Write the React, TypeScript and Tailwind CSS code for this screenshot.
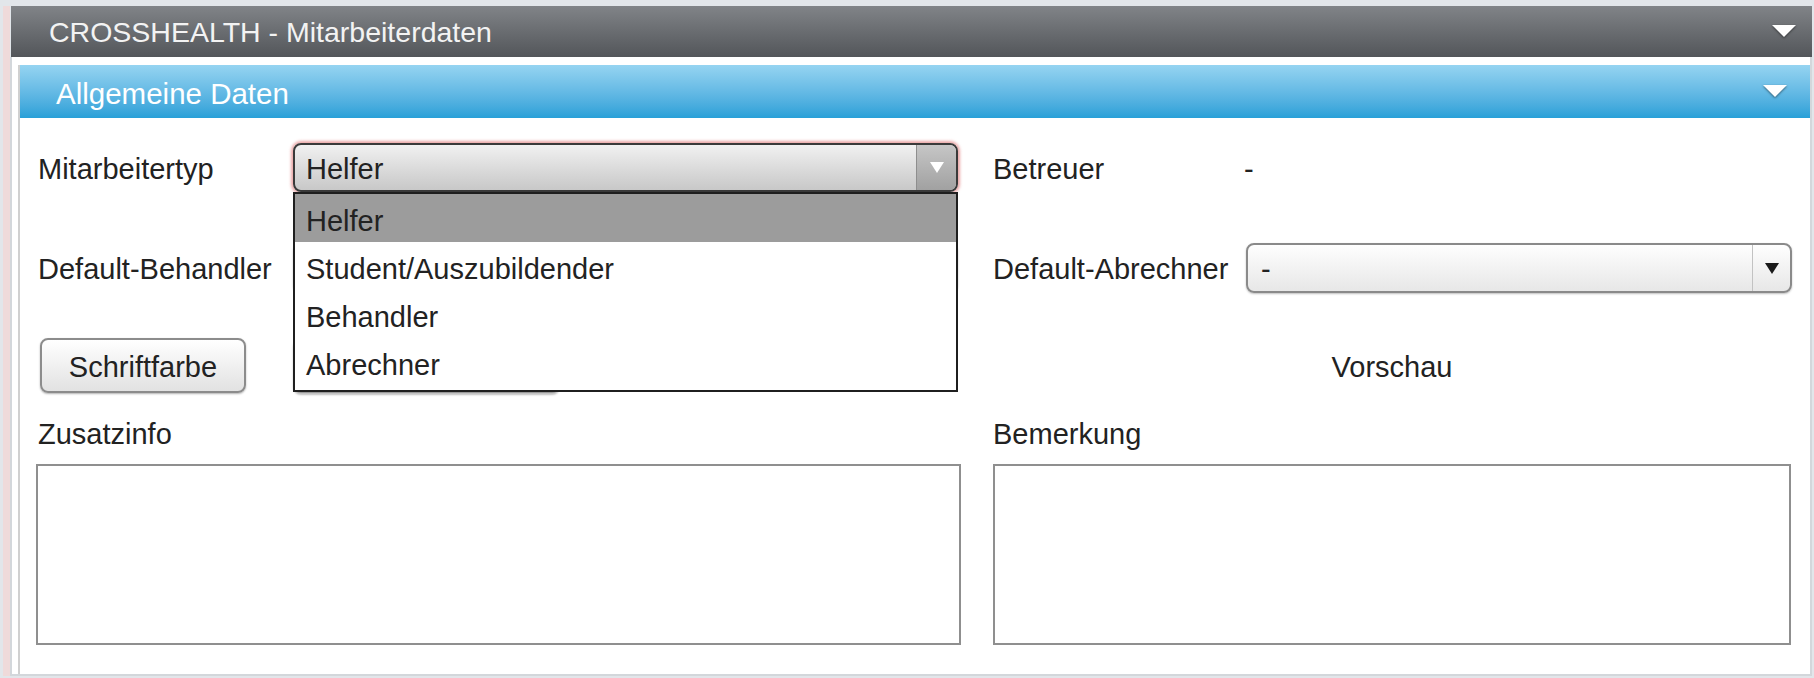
import React from 'react';

const typeOptions = ['Helfer', 'Student/Auszubildender', 'Behandler', 'Abrechner'];

// white caret on the accordion bars
const BarCaret = () => (
  <svg width="26" height="15" viewBox="0 0 26 15" className="drop-shadow-[0_1px_1px_rgba(0,0,0,0.5)]">
    <polygon points="1,1 25,1 13,13" fill="#ffffff" />
  </svg>
);

const SelectArrow = ({ light }: { light?: boolean }) => (
  <svg width="16" height="13" viewBox="0 0 16 13">
    <polygon points="1,1 15,1 8,12" fill={light ? '#ffffff' : '#1a1a1a'} />
  </svg>
);

const PlainSelect = ({ value, width }: { value: string; width: string }) => (
  <div
    className={`${width} h-full rounded-[8px] border-2 border-[#8a8a8a] bg-gradient-to-b from-[#fefefe] to-[#e7e7e7] shadow-[0_1px_2px_rgba(0,0,0,0.25)] flex items-center overflow-hidden`}
  >
    <span className="flex-1 pl-[13px] pt-[3px]">{value}</span>
    <span className="w-[38px] h-full border-l border-[#c2c2c2] flex items-center justify-center">
      <SelectArrow />
    </span>
  </div>
);

export default function App() {
  return (
    <div className="w-[1814px] h-[678px] bg-[#e2e6ea] pt-[6px] pl-[3px] overflow-hidden font-['Liberation_Sans',Arial,sans-serif] text-[29px] leading-none text-[#222]">
      <div className="w-[1809px] h-[670px] border-l-[7px] border-[#efdada] flex flex-col">
        {/* outer title bar */}
        <div className="h-[51px] ml-[1px] bg-gradient-to-b from-[#818488] to-[#53565a] flex items-center justify-between pl-[38px] pr-[15px]">
          <span className="text-[#f3f3f3] text-[28.5px] pt-[1px]">CROSSHEALTH - Mitarbeiterdaten</span>
          <BarCaret />
        </div>

        <div className="flex-1 bg-white border-l-2 border-r-2 border-b-2 border-[#d3d7db] pl-[6px] pt-[8px] flex">
          <div className="flex-1 border-l-2 border-[#d0d0d0] flex flex-col">
            {/* section bar */}
            <div className="h-[53px] bg-gradient-to-b from-[#95d4f1] to-[#27a0d8] flex items-center justify-between pl-[36px] pr-[22px]">
              <span className="text-white text-[29.5px] pt-[5px]">Allgemeine Daten</span>
              <BarCaret />
            </div>

            <div className="pl-[16px] pt-[25px]">
              {/* Mitarbeitertyp / Betreuer */}
              <div className="h-[49px] flex items-center">
                <div className="w-[925px] h-full flex items-center">
                  <span className="w-[257px] pl-[2px] pt-[3px]">Mitarbeitertyp</span>
                  <div className="relative w-[665px] h-full">
                    <div className="h-full rounded-[8px] border-2 border-[#3a3a3a] shadow-[0_0_3px_2px_rgba(222,110,110,0.6)] bg-gradient-to-b from-[#f1f1f1] via-[#dcdcdc] to-[#c8c8c8] flex items-center overflow-hidden">
                      <span className="flex-1 pl-[11px] pt-[3px]">Helfer</span>
                      <span className="w-[40px] h-full border-l border-[#8e8e8e] bg-gradient-to-b from-[#c6c6c6] to-[#a1a1a1] flex items-center justify-center">
                        <SelectArrow light />
                      </span>
                    </div>
                    <ul className="absolute top-full left-0 w-full z-20 bg-white border-2 border-[#1f1f1f] pb-[4px]">
                      {typeOptions.map((opt, i) => (
                        <li
                          key={opt}
                          className={`h-[48px] pl-[11px] pt-[6px] flex items-center ${i === 0 ? 'bg-[#9c9c9c]' : ''}`}
                        >
                          {opt}
                        </li>
                      ))}
                    </ul>
                  </div>
                </div>
                <div className="ml-[32px] pt-[3px] flex items-center">
                  <span className="w-[251px]">Betreuer</span>
                  <span>-</span>
                </div>
              </div>

              {/* Default-Behandler / Default-Abrechner */}
              <div className="mt-[51px] h-[50px] flex items-center">
                <div className="w-[925px] h-full flex items-center">
                  <span className="w-[257px] pl-[2px] pt-[3px]">Default-Behandler</span>
                  <PlainSelect value="" width="w-[665px]" />
                </div>
                <div className="ml-[32px] h-full flex items-center">
                  <span className="w-[253px] pt-[3px]">Default-Abrechner</span>
                  <PlainSelect value="-" width="w-[546px]" />
                </div>
              </div>

              {/* Schriftfarbe / Vorschau */}
              <div className="mt-[45px] h-[55px] flex items-center">
                <div className="w-[925px] h-full flex items-center">
                  <button className="ml-[4px] w-[206px] h-full pt-[3px] rounded-[8px] border-2 border-[#8c8c8c] bg-gradient-to-b from-[#ffffff] to-[#e2e2e2] shadow-[0_1px_2px_rgba(0,0,0,0.3)] text-[#222]">
                    Schriftfarbe
                  </button>
                  <div className="ml-[47px] w-[267px] h-full rounded-[8px] border-2 border-[#9a9a9a] bg-[#f4f4f4] shadow-[0_2px_2px_rgba(0,0,0,0.25)]" />
                </div>
                <div className="ml-[32px] w-[798px] pt-[3px] text-center">Vorschau</div>
              </div>

              {/* Zusatzinfo / Bemerkung */}
              <div className="mt-[24px] flex">
                <div className="w-[925px]">
                  <div className="h-[32px] pl-[2px] pt-[3px] flex items-center">Zusatzinfo</div>
                  <textarea className="mt-[15px] w-[925px] h-[181px] block resize-none border-2 border-[#8f8f8f] bg-white outline-none" />
                </div>
                <div className="ml-[32px] w-[798px]">
                  <div className="h-[32px] pt-[3px] flex items-center">Bemerkung</div>
                  <textarea className="mt-[15px] w-[798px] h-[181px] block resize-none border-2 border-[#8f8f8f] bg-white outline-none" />
                </div>
              </div>
            </div>
          </div>
        </div>
      </div>
    </div>
  );
}
